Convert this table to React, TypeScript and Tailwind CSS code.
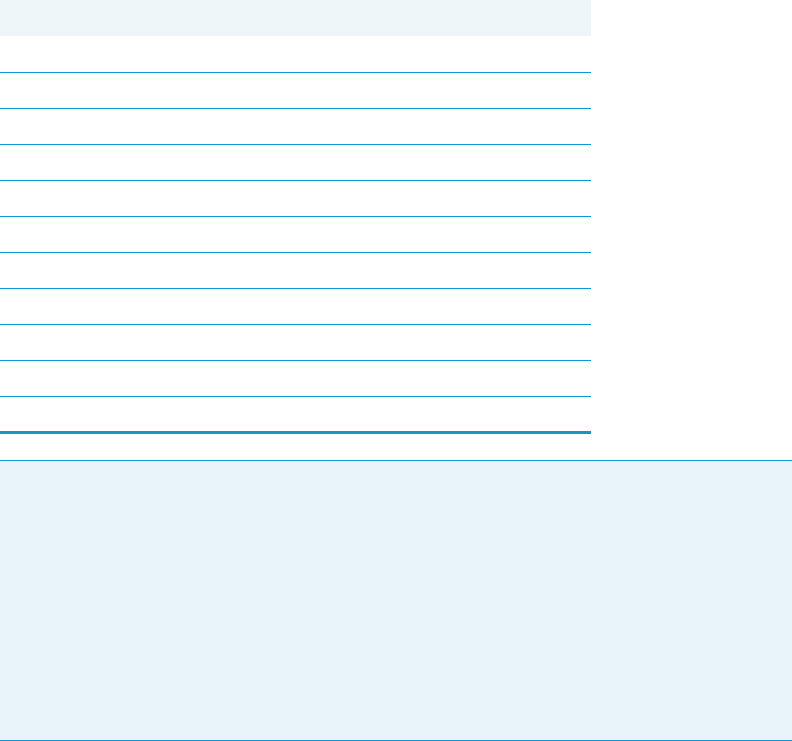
const rows = Array.from({ length: 11 }, (_, i) => i);

export default function App() {
  return (
    <div className="w-[792px] h-[741px] bg-white font-['Liberation_Sans',sans-serif] overflow-hidden">
      {/* table */}
      <div className="w-[591px]">
        <div className="h-[36px] bg-[#eef6fa]" />
        {rows.map((i) => (
          <div
            key={i}
            className={
              i === 0
                ? "h-[36px]"
                : i === 10
                ? "h-[35px] border-t border-[#0e9ad2]"
                : "h-[36px] border-t border-[#0e9ad2]"
            }
          />
        ))}
        <div className="h-[3px] bg-[#1895c5]" />
      </div>

      {/* panel */}
      <div className="mt-[26px] h-[281px] bg-[#e8f4fa] border-y border-[#0e9ad2]" />
    </div>
  );
}
